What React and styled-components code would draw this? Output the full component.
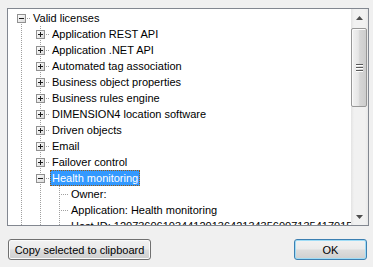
import React from 'react';
import styled, { createGlobalStyle } from 'styled-components';

const GlobalStyle = createGlobalStyle`
  html, body {
    margin: 0;
    padding: 0;
    background: #f0f0f0;
  }
  body {
    font-family: "Liberation Sans", Arial, sans-serif;
    font-size: 11px;
    color: #000;
  }
`;

const Dialog = styled.div`
  width: 373px;
  height: 267px;
  display: flex;
  flex-direction: column;
  box-sizing: border-box;
  padding-top: 8px;
`;

const TreePanel = styled.div`
  margin: 0 4px 0 7px;
  height: 218px;
  box-sizing: border-box;
  border: 1px solid #828790;
  background: #fff;
  display: flex;
`;

const TreeBody = styled.div`
  flex: 1;
  overflow: hidden;
  padding: 1px 0 0 4px;
`;

const Row = styled.div`
  display: flex;
  height: 16px;
  align-items: stretch;
`;

const dotV = 'repeating-linear-gradient(to bottom, #a0a0a0 0 1px, transparent 1px 2px)';
const dotH = 'repeating-linear-gradient(to right, #a0a0a0 0 1px, transparent 1px 2px)';

// tree guide lines drawn as background layers of a 19px cell
const lines = ({ $up, $down, $across }) => {
  const imgs = [];
  const pos = [];
  const size = [];
  if ($up) { imgs.push(dotV); pos.push('9px 0'); size.push('1px 8px'); }
  if ($down) { imgs.push(dotV); pos.push('9px 8px'); size.push('1px 8px'); }
  if ($across) { imgs.push(dotH); pos.push('11px 8px'); size.push('8px 1px'); }
  if (!imgs.length) return '';
  return `
    background-image: ${imgs.join(', ')};
    background-position: ${pos.join(', ')};
    background-size: ${size.join(', ')};
    background-repeat: no-repeat;
  `;
};

const Cell = styled.div`
  width: 19px;
  flex: none;
  display: flex;
  align-items: center;
  justify-content: center;
  padding-right: 1px;
  box-sizing: border-box;
  ${lines}
`;

const Label = styled.span`
  padding: 0 2px;
  line-height: 16px;
  white-space: nowrap;
  box-sizing: border-box;
  background: ${p => (p.$selected ? '#3399ff' : 'transparent')};
  color: ${p => (p.$selected ? '#fff' : '#000')};
  outline: ${p => (p.$selected ? '1px dotted #9a5a10' : 'none')};
  outline-offset: -1px;
`;

const Expander = ({ open }) => (
  <svg width="9" height="9" viewBox="0 0 9 9" style={{ display: 'block' }}>
    <defs>
      <linearGradient id="expg" x1="0" y1="0" x2="1" y2="1">
        <stop offset="0" stopColor="#ffffff" />
        <stop offset="1" stopColor="#d8d8d8" />
      </linearGradient>
    </defs>
    <rect x="0.5" y="0.5" width="8" height="8" fill="url(#expg)" stroke="#919191" />
    <path d="M2 4.5h5" stroke="#1c1c1c" />
    {!open && <path d="M4.5 2v5" stroke="#1c1c1c" />}
  </svg>
);

const ScrollBar = styled.div`
  width: 17px;
  flex: none;
  display: flex;
  flex-direction: column;
  background: linear-gradient(to right, #e3e3e3 0, #f1f1f1 3px, #f1f1f1 14px, #e8e8e8 17px);
`;

const Arrow = styled.div`
  height: 17px;
  flex: none;
  display: flex;
  align-items: center;
  justify-content: center;
`;

const Track = styled.div`
  flex: 1;
  padding-top: 2px;
`;

const Thumb = styled.div`
  margin: 0 1px 0 0;
  height: 79px;
  box-sizing: border-box;
  border: 1px solid #979797;
  border-radius: 2px;
  box-shadow: inset 1px 1px 0 #fafafa;
  background: linear-gradient(to right, #f2f2f2 0%, #e6e6e6 45%, #d6d6d6 55%, #cdcdcd 100%);
  display: flex;
  align-items: center;
  justify-content: center;
`;

const Footer = styled.div`
  display: flex;
  justify-content: space-between;
  padding: 13px 6px 0 8px;
`;

const Button = styled.button`
  width: ${p => p.$width}px;
  height: 21px;
  padding: 0;
  margin: 0;
  font-family: "Liberation Sans", Arial, sans-serif;
  font-size: 11px;
  color: #000;
  border: 1px solid ${p => (p.$default ? '#3c7fb1' : '#707070')};
  border-radius: 3px;
  background: linear-gradient(#f2f2f2 0%, #ebebeb 48%, #dddddd 52%, #cfcfcf 100%);
  box-shadow: inset 0 0 0 1px ${p => (p.$default ? '#9fdcf6' : '#fbfbfb')};
`;

const children = [
  'Application REST API',
  'Application .NET API',
  'Automated tag association',
  'Business object properties',
  'Business rules engine',
  'DIMENSION4 location software',
  'Driven objects',
  'Email',
  'Failover control',
];

const details = [
  'Owner:',
  'Application: Health monitoring',
  'Host ID: 1207360610344120136421343560071354170159',
];

export default function App() {
  return (
    <>
      <GlobalStyle />
      <Dialog>
        <TreePanel>
          <TreeBody>
            <Row>
              <Cell $down $across><Expander open /></Cell>
              <Label>Valid licenses</Label>
            </Row>
            {children.map(name => (
              <Row key={name}>
                <Cell $up $down />
                <Cell $up $down $across><Expander /></Cell>
                <Label>{name}</Label>
              </Row>
            ))}
            <Row>
              <Cell $up $down />
              <Cell $up $down $across><Expander open /></Cell>
              <Label $selected>Health monitoring</Label>
            </Row>
            {details.map(text => (
              <Row key={text}>
                <Cell $up $down />
                <Cell $up $down />
                <Cell $up $down $across />
                <Label>{text}</Label>
              </Row>
            ))}
          </TreeBody>
          <ScrollBar>
            <Arrow>
              <svg width="7" height="4" viewBox="0 0 7 4"><path d="M3.5 0L7 4H0z" fill="#4d4d4d" /></svg>
            </Arrow>
            <Track>
              <Thumb>
                <svg width="7" height="8" viewBox="0 0 7 8">
                  <path d="M0 0.5h7M0 3.5h7M0 6.5h7" stroke="#5a5a5a" />
                  <path d="M0 1.5h7M0 4.5h7M0 7.5h7" stroke="#ffffff" />
                </svg>
              </Thumb>
            </Track>
            <Arrow>
              <svg width="7" height="4" viewBox="0 0 7 4"><path d="M0 0h7L3.5 4z" fill="#4d4d4d" /></svg>
            </Arrow>
          </ScrollBar>
        </TreePanel>
        <Footer>
          <Button $width={143}>Copy selected to clipboard</Button>
          <Button $width={73} $default>OK</Button>
        </Footer>
      </Dialog>
    </>
  );
}
